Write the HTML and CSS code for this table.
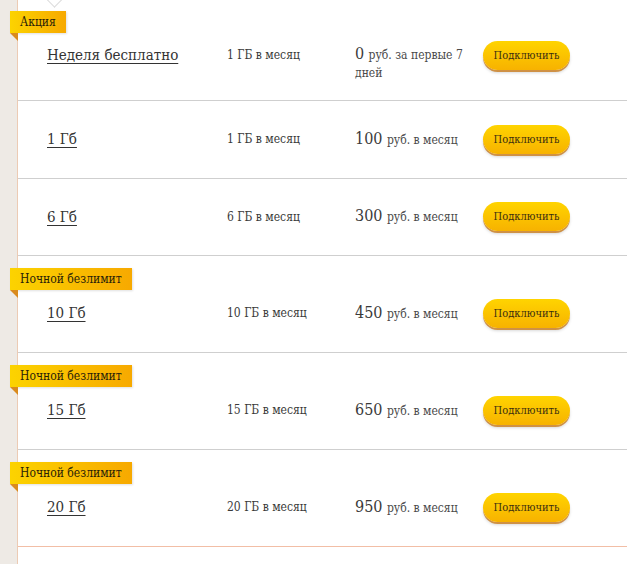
FILE: index.html
```html
<!DOCTYPE html>
<html lang="ru">
<head>
<meta charset="utf-8">
<link rel="stylesheet" href="styles.css">
</head>
<body>
<div class="page">
  <div class="strip"></div>
  <div class="list">
    <span class="chevron"></span>
    <div class="row row-first">
      <span class="badge">Акция</span>
      <a class="name" href="#">Неделя бесплатно</a>
      <span class="volume">1 ГБ в месяц</span>
      <span class="price price-wrap"><span class="sum">0</span> руб. за первые 7 дней</span>
      <button class="btn">Подключить</button>
    </div>
    <div class="row row-plain">
      <a class="name" href="#">1 Гб</a>
      <span class="volume">1 ГБ в месяц</span>
      <span class="price"><span class="sum">100</span> руб. в месяц</span>
      <button class="btn">Подключить</button>
    </div>
    <div class="row row-plain">
      <a class="name" href="#">6 Гб</a>
      <span class="volume">6 ГБ в месяц</span>
      <span class="price"><span class="sum">300</span> руб. в месяц</span>
      <button class="btn">Подключить</button>
    </div>
    <div class="row row-badge">
      <span class="badge">Ночной безлимит</span>
      <a class="name" href="#">10 Гб</a>
      <span class="volume">10 ГБ в месяц</span>
      <span class="price"><span class="sum">450</span> руб. в месяц</span>
      <button class="btn">Подключить</button>
    </div>
    <div class="row row-badge">
      <span class="badge">Ночной безлимит</span>
      <a class="name" href="#">15 Гб</a>
      <span class="volume">15 ГБ в месяц</span>
      <span class="price"><span class="sum">650</span> руб. в месяц</span>
      <button class="btn">Подключить</button>
    </div>
    <div class="row row-badge row-last">
      <span class="badge">Ночной безлимит</span>
      <a class="name" href="#">20 Гб</a>
      <span class="volume">20 ГБ в месяц</span>
      <span class="price"><span class="sum">950</span> руб. в месяц</span>
      <button class="btn">Подключить</button>
    </div>
  </div>
</div>
</body>
</html>
```

FILE: styles.css
```css
html, body {
  margin: 0;
  padding: 0;
  background: #fff;
}
body {
  font-family: "DejaVu Serif", "Liberation Serif", serif;
  font-stretch: condensed;
  color: #3a3a3a;
  width: 627px;
  height: 564px;
  overflow: hidden;
}
.page {
  display: flex;
  min-height: 564px;
}
.strip {
  width: 17px;
  flex: none;
  background: #eeeae5;
  border-right: 1px solid #eccbb4;
}
.list {
  flex: 1;
  position: relative;
}
.chevron {
  position: absolute;
  left: 30px;
  top: -8px;
  width: 12px;
  height: 12px;
  background: #fff;
  border-right: 1px solid #dcdcdc;
  border-bottom: 1px solid #dcdcdc;
  transform: rotate(45deg);
  z-index: 1;
}
.row {
  position: relative;
  display: flex;
  align-items: center;
  height: 76px;
  border-bottom: 1px solid #cfcfcf;
  padding-left: 29px;
}
.row-plain {
  height: 76.5px;
}
.row-first {
  height: 90px;
  padding-top: 10px;
}
.row-badge {
  height: 76px;
  padding-top: 19px;
  padding-bottom: 1px;
}
.row-last {
  border-bottom-color: #f2bea6;
}
.badge {
  position: absolute;
  left: -8px;
  top: 12px;
  height: 22px;
  line-height: 22px;
  padding: 0 10px;
  font-size: 12px;
  color: #2a2208;
  background: linear-gradient(to right, #fcd300, #f7a900);
  box-shadow: 1px 1px 2px rgba(0,0,0,0.12);
  z-index: 2;
}
.row-first .badge {
  top: 11px;
}
.badge::after {
  content: "";
  position: absolute;
  left: 0;
  top: 22px;
  border-top: 8px solid #d98a1e;
  border-left: 8px solid transparent;
}
.name {
  width: 180px;
  flex: none;
  font-size: 15px;
  color: #333;
  text-decoration: underline;
  text-underline-offset: 3px;
}
.volume {
  width: 128px;
  flex: none;
  font-size: 12px;
  color: #3a3a3a;
}
.price {
  width: 128px;
  flex: none;
  font-size: 12px;
  color: #4a4a4a;
  line-height: 18px;
}
.price-wrap {
  margin-top: 16px;
}
.sum {
  font-size: 16px;
  color: #3a3a3a;
  margin-right: 1px;
}
.btn {
  flex: none;
  width: 87px;
  height: 29px;
  border: none;
  border-radius: 15px;
  font-family: inherit;
  font-stretch: condensed;
  font-size: 11px;
  color: #3a2e10;
  background: linear-gradient(to bottom, #ffd400, #f7b200);
  box-shadow: 0 2px 0 #cf9145, 0 3px 3px rgba(0,0,0,0.15);
  padding: 0;
}
```
